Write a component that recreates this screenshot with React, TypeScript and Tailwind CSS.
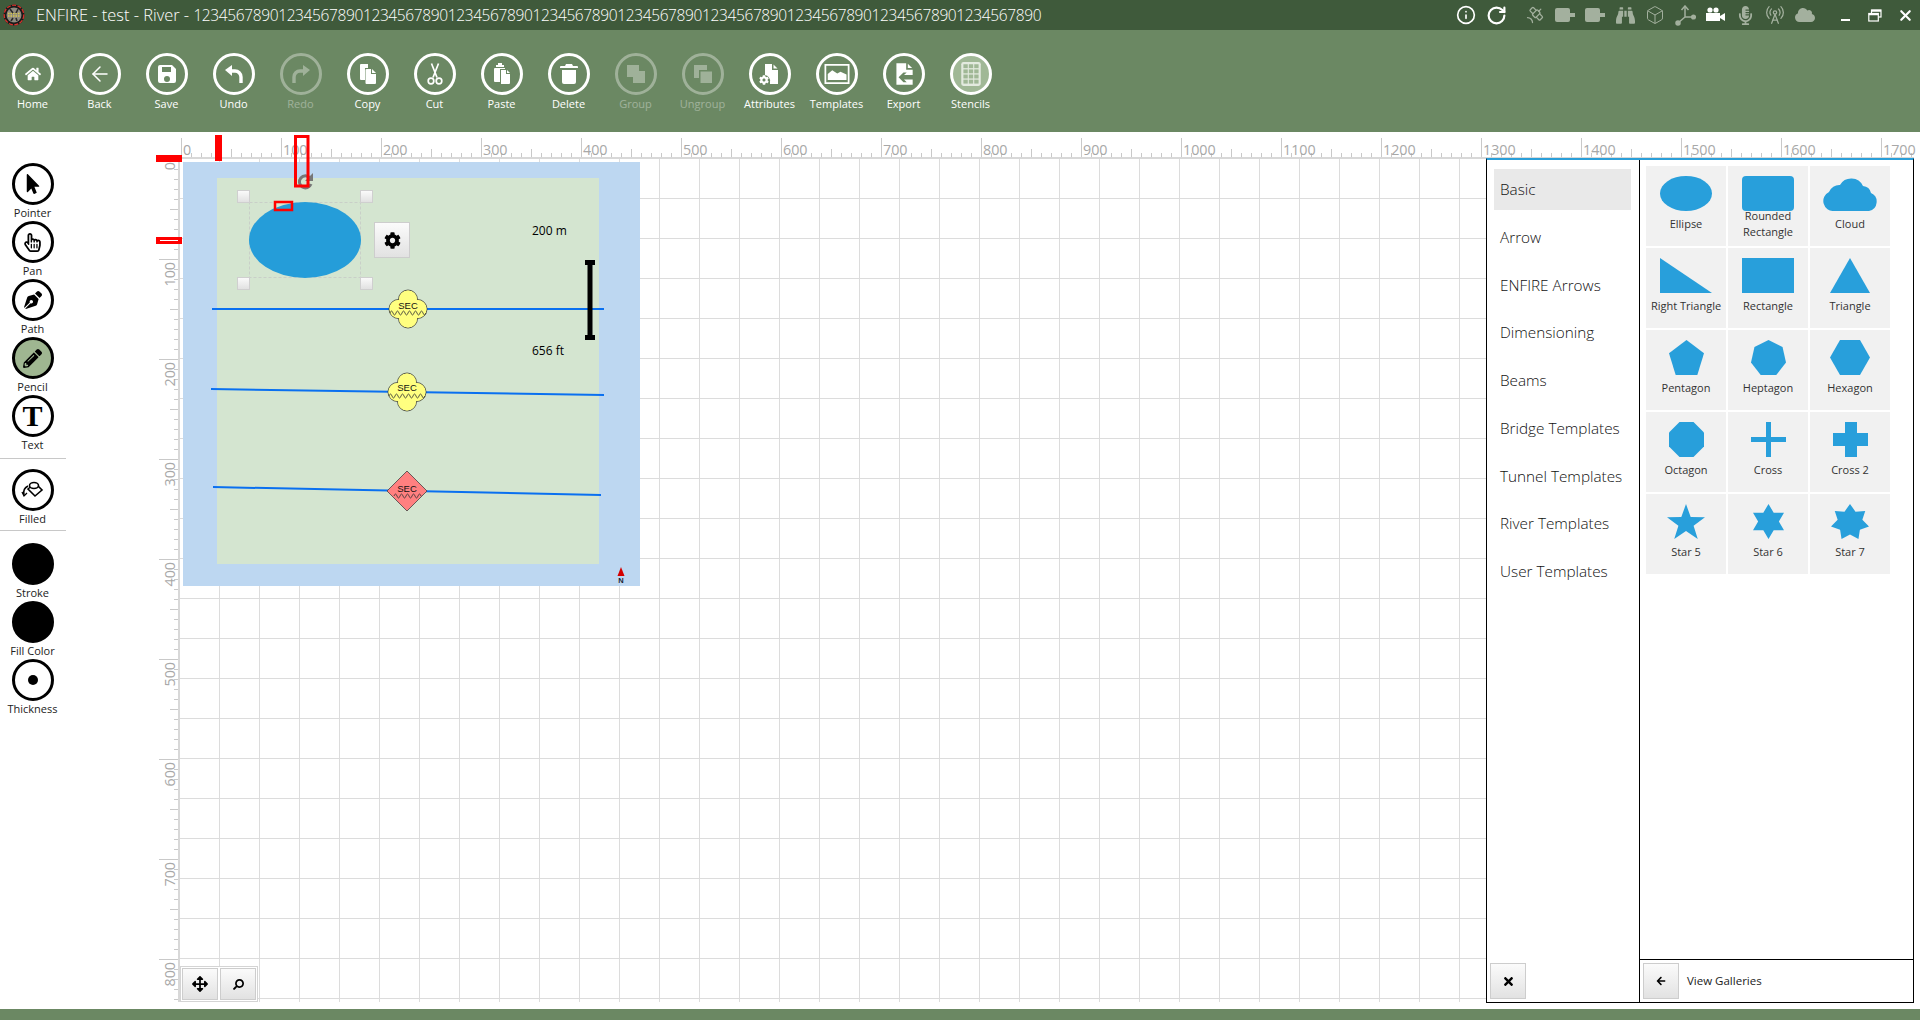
import React from "react";
import { FaHome, FaMousePointer, FaRegHandPointer, FaPenNib, FaPencilAlt, FaCog, FaArrowsAlt, FaSearch, FaTimes, FaArrowLeft, FaBinoculars, FaMicrophoneAlt, FaCloud } from "react-icons/fa";
import { ArrowLeft, Info, RotateCw, Satellite, Box, RadioTower, X } from "lucide-react";

const FONT = "font-['Open_Sans','Noto_Sans',sans-serif]";

const Ic = ({ children, s = 24 }: { children: React.ReactNode; s?: number }) => (
  <svg width={s} height={s} viewBox="0 0 24 24" fill="currentColor">{children}</svg>
);

const SaveIcon = () => (
  <Ic>
    <path fillRule="evenodd" d="M5 3h12l4 4v12a2 2 0 0 1-2 2H5a2 2 0 0 1-2-2V5a2 2 0 0 1 2-2zm2 2v5h9V5H7zm5 9a3 3 0 1 0 0 6 3 3 0 0 0 0-6z" />
  </Ic>
);
const UndoIcon = ({ flip }: { flip?: boolean }) => (
  <Ic>
    <g transform={flip ? "matrix(-1 0 0 1 24 0)" : undefined}>
      <path d="M9 9h4a6 6 0 0 1 6 6v6" fill="none" stroke="currentColor" strokeWidth="3.4" />
      <path d="M10 3v11L3 8z" />
    </g>
  </Ic>
);
const CopyIcon = () => (
  <Ic>
    <path d="M5 2h7v4H9v12H5a1 1 0 0 1-1-1V3a1 1 0 0 1 1-1z" />
    <path d="M10.5 7H15v5h5v9a1 1 0 0 1-1 1h-8.5a1 1 0 0 1-1-1V7.5z" />
    <path d="M16 7l4 4h-4z" />
  </Ic>
);
const CutIcon = () => (
  <Ic>
    <g fill="none" stroke="currentColor" strokeWidth="1.7">
      <path d="M8.5 1.5l5.5 14M15.5 1.5L10 15.5" />
      <circle cx="8" cy="19" r="2.8" />
      <circle cx="16" cy="19" r="2.8" />
    </g>
  </Ic>
);
const PasteIcon = () => (
  <Ic>
    <path d="M8 1h4v2h2v2H6V3h2z" />
    <path d="M5 6h10v1H10v13H5a1 1 0 0 1-1-1V7a1 1 0 0 1 1-1z" />
    <path d="M11 8h5v4h4v9a1 1 0 0 1-1 1h-8z" />
    <path d="M17 8l3 3h-3z" />
  </Ic>
);
const TrashIcon = () => (
  <Ic>
    <path d="M9 2h6l1 2h4a1 1 0 0 1 1 1v1H3V5a1 1 0 0 1 1-1h4z" />
    <path d="M5 8h14v12a2 2 0 0 1-2 2H7a2 2 0 0 1-2-2z" />
  </Ic>
);
const GroupIcon = () => (
  <Ic>
    <path d="M3 3h12v6h6v12H9v-6H3z" />
  </Ic>
);
const UngroupIcon = () => (
  <Ic>
    <path fillRule="evenodd" d="M3 3h13v5H8v8H3z" />
    <path d="M9.5 9.5H21V21H9.5z" />
  </Ic>
);
const AttrIcon = () => (
  <span className="relative block w-[24px] h-[24px]">
    <svg width="24" height="24" viewBox="0 0 24 24" fill="currentColor">
      <path d="M7 2h7v6h6v14h-8v-2a6 6 0 0 0-5-7z" />
      <path d="M15.5 2.500l4 4h-4z" />
    </svg>
    <FaCog className="absolute left-[1px] bottom-[1px]" size={10} />
  </span>
);
const TemplateIcon = () => (
  <Ic s={30}>
    <path fillRule="evenodd" d="M2 4h20v16H2zM3.4 5.4v13.2h17.2V5.4z" />
    <path d="M4.6 16.8V12l3.6-3 4 2.6 2.6-1.5 4.8 2.2v4.5z" />
  </Ic>
);
const ExportIcon = () => (
  <Ic s={26}>
    <path d="M5 2h9v6h6v5h-8l2.5-2.5h-3L7 15l4.500 4.500h3L12 17h8v5H5z" />
    <path d="M15.500 2.500L19.500 6.500h-4z" />
  </Ic>
);
const StencilIcon = () => (
  <Ic s={26}>
    <rect x="3" y="1" width="18" height="22" rx="2" fill="#e3eadf" />
    {[0, 1, 2].flatMap((c) =>
      [0, 1, 2, 3].map((r) => <rect key={`${c}-${r}`} x={5 + c * 5} y={3 + r * 4.75} width="4" height="3.6" fill="#a0b896" />)
    )}
  </Ic>
);
const FilledIcon = () => (
  <svg width="26" height="26" viewBox="0 0 26 26" fill="none" stroke="#000" strokeWidth="1.600">
    <path d="M8 12l7-6 7 7-7 6z" fill="#fff" />
    <ellipse cx="14" cy="8.500" rx="4.500" ry="3" fill="#fff" />
    <path d="M4 18c-1-4 0-7 4-9" />
    <path d="M2 15l2 4 3-3" strokeWidth="1.300" />
  </svg>
);

const tools: { label: string; icon: React.ReactNode; dim?: boolean; active?: boolean }[] = [
  { label: "Home", icon: <FaHome size={16} /> },
  { label: "Back", icon: <ArrowLeft size={24} strokeWidth={1.5} /> },
  { label: "Save", icon: <SaveIcon /> },
  { label: "Undo", icon: <UndoIcon /> },
  { label: "Redo", icon: <UndoIcon flip />, dim: true },
  { label: "Copy", icon: <CopyIcon /> },
  { label: "Cut", icon: <CutIcon /> },
  { label: "Paste", icon: <PasteIcon /> },
  { label: "Delete", icon: <TrashIcon /> },
  { label: "Group", icon: <GroupIcon />, dim: true },
  { label: "Ungroup", icon: <UngroupIcon />, dim: true },
  { label: "Attributes", icon: <AttrIcon /> },
  { label: "Templates", icon: <TemplateIcon /> },
  { label: "Export", icon: <ExportIcon /> },
  { label: "Stencils", icon: <StencilIcon />, active: true },
];

const Logo = () => (
  <svg width="22" height="22" viewBox="0 0 22 22" className="ml-[3px]">
    <circle cx="11" cy="11" r="10.500" fill="#1a1a1a" />
    <circle cx="11" cy="11" r="9.800" fill="none" stroke="#d8322c" strokeWidth="1.300" strokeDasharray="4 1.500" />
    <circle cx="11" cy="11" r="7.500" fill="#8f8b80" />
    <path d="M5 12h12M5 9.500h12" stroke="#d9c94e" strokeWidth="1.400" strokeDasharray="1.500 1" />
    <path d="M7 5l3 4M15 5l-2 4M8 17l2-3M14 17l-1-3" stroke="#2b2b2b" strokeWidth="1.600" />
  </svg>
);

const AxesIcon = () => (
  <svg width="21" height="21" viewBox="0 0 21 21" fill="none" stroke="currentColor" strokeWidth="1.500">
    <path d="M10 12V2M10 12h8M10 12l-7 6" />
    <path d="M6.500 5L10 1l3.500 4" />
    <circle cx="18.500" cy="12" r="1.800" fill="currentColor" />
    <circle cx="3" cy="18" r="2" fill="currentColor" />
  </svg>
);
const CamIcon = () => (
  <svg width="20" height="16" viewBox="0 0 20 16" fill="currentColor">
    <rect x="0" y="1" width="15" height="14" rx="2" />
    <path d="M14 6h6v4h-6z" />
  </svg>
);
const MovieCam = () => (
  <svg width="20" height="16" viewBox="0 0 20 16" fill="currentColor">
    <circle cx="5" cy="3" r="2.600" />
    <circle cx="11" cy="3" r="2.600" />
    <path d="M1 6h14v8H1z" />
    <path d="M15 9l5-3v8l-5-3z" />
  </svg>
);

const Circle = ({ children, active, solid }: { children?: React.ReactNode; active?: boolean; solid?: boolean }) => (
  <div className={`w-[42px] h-[42px] rounded-full border-[3px] border-black flex items-center justify-center text-black ${active ? "bg-[#9fb691]" : ""} ${solid ? "bg-black" : ""}`}>
    {children}
  </div>
);
const Side = ({ label, children, active, solid }: { label: string; children?: React.ReactNode; active?: boolean; solid?: boolean }) => (
  <div className="w-[65px] h-[58px] flex flex-col items-center">
    <Circle active={active} solid={solid}>{children}</Circle>
    <div className="text-[11px] leading-[16px] text-[#222] whitespace-nowrap">{label}</div>
  </div>
);

const range = (n: number, f: (i: number) => number) => Array.from({ length: n }, (_, i) => f(i));

const Wave = ({ x, y, n }: { x: number; y: number; n: number }) => {
  let d = `M${x} ${y} q1.500 -4 3 0`;
  for (let i = 1; i < n; i++) d += " t3 0";
  return <path d={d} fill="none" stroke="#333" strokeWidth="0.800" />;
};
const Cloud4 = ({ cx, cy, ty }: { cx: number; cy: number; ty: number }) => (
  <g transform={`translate(${cx} ${cy})`}>
    {[[0, -9.5], [9.5, 0], [0, 9.5], [-9.5, 0]].map(([x, y]) => (
      <circle key={`${x}${y}`} cx={x} cy={y} r="9.500" fill="#ffff80" stroke="#333" strokeWidth="0.800" />
    ))}
    {[[0, -9.5], [9.5, 0], [0, 9.5], [-9.5, 0]].map(([x, y]) => (
      <circle key={`${x}_${y}`} cx={x} cy={y} r="9" fill="#ffff80" />
    ))}
    <rect x="-9" y="-9" width="18" height="18" fill="#ffff80" />
    <text x="0" y={ty} textAnchor="middle" fontSize="9.500" fill="#111" fontFamily="Liberation Sans">SEC</text>
    <Wave x={-18} y={4} n={12} />
  </g>
);

const CanvasArt = () => {
  const vx = range(43, (i) => 179.5 + i * 40).filter((x) => x > 180);
  const hy = range(22, (i) => 158.5 + i * 40).filter((y) => y > 160);
  const topTicks = range(174, (i) => 181 + i * 10);
  const leftTicks = range(85, (i) => 159 + i * 10);
  const grid = [...vx.map((x) => `M${x} 159V1002`), ...hy.map((y) => `M180 ${y}H1914`)].join("");
  const tt = topTicks.map((x, i) => `M${x + 0.5} ${i % 10 === 0 ? 138 : i % 5 === 0 ? 149 : 153}V158`).join("");
  const lt = leftTicks.map((y, i) => `M${i % 10 === 0 ? 159 : i % 5 === 0 ? 170 : 174} ${y + 0.5}H179`).join("");
  return (
    <svg className="absolute inset-0" width="1854" height="877" viewBox="66 132 1854 877" fontFamily="Open Sans">
      <defs>
        <linearGradient id="hg" x1="0" y1="0" x2="0" y2="1">
          <stop offset="0" stopColor="#fbfbfb" />
          <stop offset="1" stopColor="#e0e0e0" />
        </linearGradient>
      </defs>
      <path d={grid} stroke="#dcdcdc" strokeWidth="1" fill="none" />
      <path d={tt} stroke="#c9c9c9" strokeWidth="1" fill="none" />
      <path d={lt} stroke="#c9c9c9" strokeWidth="1" fill="none" />
      <rect x="178" y="157" width="1736" height="2" fill="#d8d8d8" />
      <rect x="178" y="157" width="2" height="845" fill="#d8d8d8" />
      {range(18, (i) => i).map((i) => (
        <text key={i} x={183 + i * 100} y={154.500} fontSize="14.300" fill="#a8a8a8">{i * 100}</text>
      ))}
      {range(9, (i) => i).map((i) => (
        <text key={i} transform={`translate(175 ${162 + i * 100}) rotate(-90)`} textAnchor="end" fontSize="14.300" fill="#a8a8a8">{i * 100}</text>
      ))}
      <rect x="183" y="162" width="457" height="424" fill="#bdd7f1" />
      <rect x="217" y="178" width="382" height="386" fill="#d4e5d0" />

      <path d="M212 309H604" stroke="#0a70f0" strokeWidth="2" />
      <path d="M211 389L604 395" stroke="#0a70f0" strokeWidth="2" />
      <path d="M213 487L601 495" stroke="#0a70f0" strokeWidth="2" />

      <rect x="249.500" y="202.500" width="111" height="75" fill="none" stroke="#c9cfc8" strokeWidth="1" strokeDasharray="3 2" />
      <ellipse cx="305" cy="240" rx="56" ry="38" fill="#259dd9" />
      {[[237, 190], [360, 190], [237, 277], [360, 277]].map(([x, y]) => (
        <rect key={`${x}${y}`} x={x + 0.5} y={y + 0.5} width="12" height="12" fill="url(#hg)" stroke="#cfcfcf" />
      ))}
      <path d="M310 178a6 6 0 1 0 1 6" fill="none" stroke="#777" strokeWidth="3" />
      <path d="M313 173v8h-8z" fill="#777" />

      <text x="532" y="234.500" fontSize="12" fill="#000">200 m</text>
      <text x="532" y="355" fontSize="12" fill="#000">656 ft</text>

      <rect x="587.500" y="260" width="5" height="80" fill="#000" />
      <rect x="585" y="260" width="10" height="5" fill="#000" />
      <rect x="585" y="335" width="10" height="5" fill="#000" />

      <Cloud4 cx={408} cy={309} ty={0} />
      <Cloud4 cx={407} cy={392} ty={-1} />
      <g transform="translate(407 491)">
        <path d="M0 -20L20 0L0 20L-20 0Z" fill="#ff8080" stroke="#444" strokeWidth="0.800" />
        <text x="0" y="0.500" textAnchor="middle" fontSize="9.500" fill="#111" fontFamily="Liberation Sans">SEC</text>
        <Wave x={-13} y={5} n={9} />
      </g>

      <path d="M621 567l3.500 9h-7z" fill="#d40000" />
      <text x="621" y="583" textAnchor="middle" fontSize="7.500" fontWeight="700" fill="#223" fontFamily="Liberation Sans">N</text>

      <rect x="215" y="135" width="7" height="26" fill="#ff0000" />
      <rect x="295.500" y="136.500" width="12.500" height="49.500" fill="none" stroke="#ff0000" strokeWidth="3" />
      <rect x="156" y="155" width="26" height="7" fill="#ff0000" />
      <rect x="156" y="237" width="26" height="7" fill="#ff0000" />
      <path d="M160 240.500H178" stroke="#fff" strokeWidth="1" />
      <rect x="275" y="202" width="17" height="8" fill="none" stroke="#ff0000" strokeWidth="2.500" />
    </svg>
  );
};

const BLUE = "#289fdb";
const cloudPath = "M13 35A10 10 0 0 1 8 16A11 11 0 0 1 19 9A13 13 0 0 1 42 10A9 9 0 0 1 50 17A9.500 9.500 0 0 1 48 35Z";
const fit = (pts: number[][], w: number, h: number) => {
  const xs = pts.map((p) => p[0]);
  const ys = pts.map((p) => p[1]);
  const minX = Math.min(...xs), maxX = Math.max(...xs), minY = Math.min(...ys), maxY = Math.max(...ys);
  return pts.map(([x, y]) => `${((x - minX) / (maxX - minX)) * w},${((y - minY) / (maxY - minY)) * h}`).join(" ");
};
const star = (n: number, w: number, h: number, ratio: number) => {
  const pts: number[][] = [];
  for (let i = 0; i < n * 2; i++) {
    const a = -Math.PI / 2 + (i * Math.PI) / n;
    const r = i % 2 === 0 ? 1 : ratio;
    pts.push([Math.cos(a) * r, Math.sin(a) * r]);
  }
  return fit(pts, w, h);
};
const poly = (n: number, w: number, h: number) => {
  const pts: number[][] = [];
  for (let i = 0; i < n; i++) {
    const a = -Math.PI / 2 + (i * 2 * Math.PI) / n;
    pts.push([Math.cos(a), Math.sin(a)]);
  }
  return fit(pts, w, h);
};

const shapes: { label: string; w: number; el: React.ReactNode }[] = [
  { label: "Ellipse", w: 52, el: <ellipse cx="26" cy="17.500" rx="26" ry="17.500" /> },
  { label: "Rounded Rectangle", w: 52, el: <rect width="52" height="35" rx="4" /> },
  { label: "Cloud", w: 58, el: <path d={cloudPath} /> },
  { label: "Right Triangle", w: 52, el: <polygon points="0,0 52,35 0,35" /> },
  { label: "Rectangle", w: 52, el: <rect width="52" height="35" /> },
  { label: "Triangle", w: 40, el: <polygon points="20,0 40,35 0,35" /> },
  { label: "Pentagon", w: 35, el: <polygon points={poly(5, 35, 35)} /> },
  { label: "Heptagon", w: 35, el: <polygon points={poly(7, 35, 35)} /> },
  { label: "Hexagon", w: 40, el: <polygon points="10,0 30,0 40,17.500 30,35 10,35 0,17.500" /> },
  { label: "Octagon", w: 35, el: <polygon points="10.500,0 24.500,0 35,10.500 35,24.500 24.500,35 10.500,35 0,24.500 0,10.500" /> },
  { label: "Cross", w: 35, el: <polygon points="15,0 20,0 20,15 35,15 35,20 20,20 20,35 15,35 15,20 0,20 0,15 15,15" /> },
  { label: "Cross 2", w: 35, el: <polygon points="12,0 24,0 24,11 35,11 35,24 24,24 24,35 12,35 12,24 0,24 0,11 12,11" /> },
  { label: "Star 5", w: 38, el: <polygon points={star(5, 38, 35, 0.4)} /> },
  { label: "Star 6", w: 31, el: <polygon points={star(6, 31, 35, 0.58)} /> },
  { label: "Star 7", w: 38, el: <polygon points={star(7, 38, 35, 0.65)} /> },
];

const nav = ["Basic", "Arrow", "ENFIRE Arrows", "Dimensioning", "Beams", "Bridge Templates", "Tunnel Templates", "River Templates", "User Templates"];

const btn = "flex items-center justify-center w-[36px] h-[36px] border border-[#cdcdcd] bg-gradient-to-b from-[#fbfbfb] to-[#e2e2e2] text-black";

const digits = "1234567890".repeat(10);

export default function App() {
  return (
    <div className={`${FONT} w-full h-screen overflow-hidden flex flex-col bg-white`}>
      <div className="h-[30px] bg-[#3f5a3b] flex items-center shrink-0 text-white">
        <Logo />
        <div className="ml-[11px] text-[16.400px] font-light whitespace-nowrap flex items-baseline">
          <span className="whitespace-pre">ENFIRE - test - River - </span>
          <span className="text-[15.500px] tracking-[-0.370px]">{digits}</span>
        </div>
        <div className="ml-auto flex items-center h-full text-[#a3b09e] relative">
          <div className="w-[30px] flex justify-center text-white"><Info size={20} strokeWidth={2} /></div>
          <div className="w-[30px] flex justify-center text-white mr-[9px]"><RotateCw size={21} strokeWidth={2.5} /></div>
          <div className="w-[30px] flex justify-center"><Satellite size={20} strokeWidth={1.500} /></div>
          <div className="w-[30px] flex justify-center"><CamIcon /></div>
          <div className="w-[30px] flex justify-center"><CamIcon /></div>
          <div className="w-[30px] flex justify-center"><FaBinoculars size={19} /></div>
          <div className="w-[30px] flex justify-center"><Box size={20} strokeWidth={1.200} /></div>
          <div className="w-[30px] flex justify-center"><AxesIcon /></div>
          <div className="w-[30px] flex justify-center text-white"><MovieCam /></div>
          <div className="w-[30px] flex justify-center"><FaMicrophoneAlt size={19} /></div>
          <div className="w-[30px] flex justify-center"><RadioTower size={20} strokeWidth={1.500} /></div>
          <div className="w-[30px] flex justify-center"><FaCloud size={20} /></div>
          <div className="w-[10px]" />
          <div className="w-[30px] flex justify-center text-white"><div className="w-[9px] h-[2px] bg-white mt-[9px]" /></div>
          <div className="w-[30px] flex justify-center text-white">
            <svg width="14" height="13" viewBox="0 0 14 13" fill="none" stroke="#fff" strokeWidth="1.200">
              <rect x="3.500" y="1" width="9.500" height="7" />
              <rect x="0.800" y="4.500" width="9.500" height="7.500" fill="#3f5a3b" />
              <path d="M0.800 5.200H10.300M3.500 1.800H13" strokeWidth="2" />
            </svg>
          </div>
          <div className="w-[30px] flex justify-center text-white"><X size={17} strokeWidth={3} /></div>
        </div>
      </div>

      <div className="h-[102px] bg-[#6b8863] shrink-0 flex items-start pt-[23px] -ml-[1px]">
        {tools.map((t) => (
          <div key={t.label} className={`w-[67px] flex flex-col items-center text-white ${t.dim ? "opacity-35" : ""}`}>
            <div className={`w-[42px] h-[42px] rounded-full border-[3px] border-white flex items-center justify-center ${t.active ? "bg-[#a0b896]" : ""}`}>
              {t.icon}
            </div>
            <div className="text-[11px] leading-[16px] mt-[1px] whitespace-nowrap">{t.label}</div>
          </div>
        ))}
      </div>

      <div className="flex-1 flex min-h-0">
        <div className="w-[66px] shrink-0 pt-[31px] flex flex-col">
          <Side label="Pointer"><FaMousePointer size={20} /></Side>
          <Side label="Pan"><FaRegHandPointer size={19} /></Side>
          <Side label="Path"><FaPenNib size={18} /></Side>
          <Side label="Pencil" active><FaPencilAlt size={19} /></Side>
          <Side label="Text"><span className="font-['Liberation_Serif',serif] font-bold text-[30px] leading-none">T</span></Side>
          <div className="h-[5px]" />
          <div className="border-t border-[#c8c8c8] w-[66px] h-[11px]" />
          <Side label="Filled"><FilledIcon /></Side>
          <div className="h-[4px] -mt-[1px]" />
          <div className="border-t border-[#c8c8c8] w-[66px] h-[13px]" />
          <Side label="Stroke" solid />
          <Side label="Fill Color" solid />
          <Side label="Thickness"><div className="w-[10px] h-[10px] rounded-full bg-black" /></Side>
        </div>

        <div className="flex-1 relative overflow-hidden">
          <CanvasArt />

          <div className={`${btn} absolute left-[308px] top-[90px] text-[15px]`}><FaCog size={17} /></div>

          <div className="absolute left-[114px] top-[834px] w-[78px] h-[36px] border border-[#d4d4d4] bg-white flex items-center justify-center gap-[2px]">
            <div className={`${btn} !h-[32px]`}><FaArrowsAlt size={16} /></div>
            <div className={`${btn} !h-[32px]`}><FaSearch size={11} className="-scale-x-100" /></div>
          </div>

          <div className="absolute right-[6px] top-[26px] bottom-[6px] w-[428px] bg-white border-x border-b border-black border-t-2 border-t-[#2a9fd9] flex">
            <div className="w-[152px] flex flex-col">
              <div className="pt-[9px] pl-[7px] flex flex-col gap-[6.750px]">
                {nav.map((n, i) => (
                  <div key={n} className={`w-[137px] h-[41px] flex items-center pl-[6px] text-[15.300px] font-light text-[#111] whitespace-nowrap ${i === 0 ? "bg-[#e9e9e9]" : ""}`}>{n}</div>
                ))}
              </div>
              <div className={`${btn} mt-auto mb-[3px] ml-[3px]`}><FaTimes size={13} /></div>
            </div>
            <div className="flex-1 border-l border-black flex flex-col">
              <div className="flex-1 pl-[6px] pt-[6px]">
                <div className="grid grid-cols-[80px_80px_80px] auto-rows-[80px] gap-[2px]">
                  {shapes.map((s) => (
                    <div key={s.label} className="bg-[#f1f1f1] flex flex-col items-center pt-[10px]">
                      <svg width={s.w} height="35" viewBox={`0 0 ${s.w} 35`} fill={BLUE}>{s.el}</svg>
                      <div className="-mt-[3px] h-[32px] flex items-center text-center text-[11px] leading-[16px] text-[#333] w-[76px] justify-center">{s.label}</div>
                    </div>
                  ))}
                </div>
              </div>
              <div className="h-[43px] border-t border-black flex items-start pt-[3px] pl-[3px]">
                <div className={btn}><FaArrowLeft size={10} /></div>
                <div className="ml-[8px] h-[36px] flex items-center text-[11.500px] text-[#222]">View Galleries</div>
              </div>
            </div>
          </div>
        </div>
      </div>

      <div className="h-[11px] bg-[#6b8863] shrink-0" />
    </div>
  );
}
